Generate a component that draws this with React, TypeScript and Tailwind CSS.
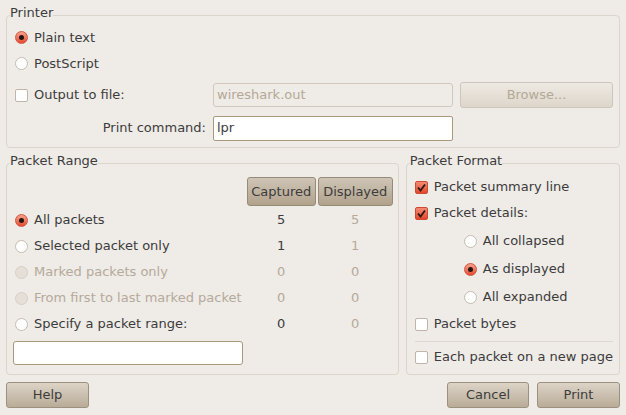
import * as React from "react";

function Radio({ checked, disabled }: { checked?: boolean; disabled?: boolean }) {
  if (disabled) {
    return <span className="w-[13px] h-[13px] shrink-0 rounded-full border border-[#d6cfc5] bg-[#e5dfd7]" />;
  }
  if (checked) {
    return (
      <span className="w-[13px] h-[13px] shrink-0 rounded-full border border-[#d0563e] bg-linear-to-b from-[#f7a08b] to-[#e6492f] flex items-center justify-center">
        <span className="w-[5px] h-[5px] rounded-full bg-[#231611]" />
      </span>
    );
  }
  return <span className="w-[13px] h-[13px] shrink-0 rounded-full border border-[#c6bdb0] bg-white" />;
}

function Check({ checked }: { checked?: boolean }) {
  if (checked) {
    return (
      <span className="w-[13px] h-[13px] shrink-0 rounded-[2px] border border-[#cf4a32] bg-linear-to-b from-[#f38a73] to-[#e2452b] flex items-center justify-center">
        <svg width="11" height="11" viewBox="0 0 11 11">
          <path d="M2 5.5 L4.5 8.5 L9 2.5" fill="none" stroke="#2a1812" strokeWidth="1.8" />
        </svg>
      </span>
    );
  }
  return <span className="w-[13px] h-[13px] shrink-0 rounded-[2px] border border-[#bfb5a8] bg-white" />;
}

function Frame({ title, className, children }: { title: string; className?: string; children: React.ReactNode }) {
  return (
    <fieldset className={"border border-[#dbd5cc] rounded-[4px] pl-[3px] " + (className ?? "")}>
      <legend className="leading-[15px] pb-[5px] text-[#3c3c3c]">{title}</legend>
      {children}
    </fieldset>
  );
}

function Button({ label, className, disabled, dark }: { label: string; className?: string; disabled?: boolean; dark?: boolean }) {
  let look = "border-[#9c907e] from-[#ddd4c7] to-[#b9ac98] text-[#3c3c3c]";
  if (disabled) look = "border-[#cdc5b9] from-[#eee9e2] to-[#ddd6cb] text-[#b3a995]";
  if (dark) look = "border-[#978a77] from-[#cfc5b6] to-[#b1a28c] text-[#3c3c3c]";
  return (
    <button className={"rounded-[3px] border bg-linear-to-b flex items-center justify-center " + look + " " + (className ?? "")}>
      {label}
    </button>
  );
}

function Choice({ control, label, disabled }: { control: React.ReactNode; label: string; disabled?: boolean }) {
  return (
    <div className="flex items-center gap-[6px] pl-[2px] whitespace-nowrap">
      {control}
      <span className={disabled ? "text-[#b4aa9a]" : "text-[#3c3c3c]"}>{label}</span>
    </div>
  );
}

const ranges = [
  { label: "All packets", checked: true, cap: "5", dis: "5" },
  { label: "Selected packet only", cap: "1", dis: "1" },
  { label: "Marked packets only", disabled: true, cap: "0", dis: "0" },
  { label: "From first to last marked packet", disabled: true, cap: "0", dis: "0" },
  { label: "Specify a packet range:", cap: "0", dis: "0" },
];

export default function App() {
  return (
    <div
      className="w-[626px] h-[415px] bg-[#efebe7] px-[6px] pt-[5px] flex flex-col text-[13px] text-[#3c3c3c]"
      style={{ fontFamily: '"DejaVu Sans", sans-serif' }}
    >
      <Frame title="Printer" className="pr-[5px] pb-[6px]">
        <div className="pl-[3px] flex flex-col">
          <div className="h-[25px] flex items-center">
            <Choice control={<Radio checked />} label="Plain text" />
          </div>
          <div className="h-[26px] pt-[1px] flex items-center">
            <Choice control={<Radio />} label="PostScript" />
          </div>
          <div className="h-[26px] mt-[6px] flex items-center">
            <div className="w-[200px]">
              <Choice control={<Check />} label="Output to file:" />
            </div>
            <div className="w-[240px] h-[24px] rounded-[3px] border border-[#d0c8bc] px-[3px] flex items-center text-[#b3a996]">
              wireshark.out
            </div>
            <Button label="Browse..." disabled className="ml-[7px] w-[153px] h-[26px]" />
          </div>
          <div className="h-[26px] mt-[7px] flex items-center">
            <div className="w-[200px] pr-[7px] text-right">Print command:</div>
            <div className="w-[240px] h-[25px] rounded-[2px] border border-[#a8997f] bg-white px-[3px] flex items-center">
              lpr
            </div>
          </div>
        </div>
      </Frame>

      <div className="flex gap-[7px] mt-[5px]">
        <Frame title="Packet Range" className="w-[393px] pr-[5px] pb-[9px]">
          <div className="pl-[3px] flex flex-col">
            <div className="flex justify-end gap-[2px] mt-[4px]">
              <Button label="Captured" dark className="w-[69px] h-[29px]" />
              <Button label="Displayed" dark className="w-[75px] h-[29px]" />
            </div>
            {ranges.map((r) => (
              <div key={r.label} className="h-[26px] pt-[2px] flex items-center">
                <div className="flex-1">
                  <Choice control={<Radio checked={r.checked} disabled={r.disabled} />} label={r.label} disabled={r.disabled} />
                </div>
                <div className={"w-[69px] text-center " + (r.disabled ? "text-[#b4aa9a]" : "text-[#3c3c3c]")}>{r.cap}</div>
                <div className="w-[75px] ml-[2px] text-center text-[#b4aa9a]">{r.dis}</div>
              </div>
            ))}
            <div className="mt-[5px] w-[230px] h-[24px] rounded-[3px] border border-[#a8997f] bg-white" />
          </div>
        </Frame>

        <Frame title="Packet Format" className="flex-1 pr-[6px] pb-[4px]">
          <div className="pl-[3px] pt-[1px] flex flex-col">
            <div className="h-[26px] flex items-center">
              <Choice control={<Check checked />} label="Packet summary line" />
            </div>
            <div className="h-[26px] flex items-center">
              <Choice control={<Check checked />} label="Packet details:" />
            </div>
            <div className="mt-[1px] pl-[49px] flex flex-col">
              <div className="h-[28px] flex items-center">
                <Choice control={<Radio />} label="All collapsed" />
              </div>
              <div className="h-[28px] flex items-center">
                <Choice control={<Radio checked />} label="As displayed" />
              </div>
              <div className="h-[28px] flex items-center">
                <Choice control={<Radio />} label="All expanded" />
              </div>
            </div>
            <div className="h-[26px] flex items-center">
              <Choice control={<Check />} label="Packet bytes" />
            </div>
            <div className="mt-[4px] ml-[2px] h-px bg-[#ded8cf]" />
            <div className="h-[26px] mt-[2px] flex items-center">
              <Choice control={<Check />} label="Each packet on a new page" />
            </div>
          </div>
        </Frame>
      </div>

      <div className="flex items-center mt-[7px] gap-[8px]">
        <Button label="Help" className="w-[83px] h-[26px]" />
        <div className="flex-1" />
        <Button label="Cancel" className="w-[82px] h-[26px]" />
        <Button label="Print" className="w-[83px] h-[26px]" />
      </div>
    </div>
  );
}
